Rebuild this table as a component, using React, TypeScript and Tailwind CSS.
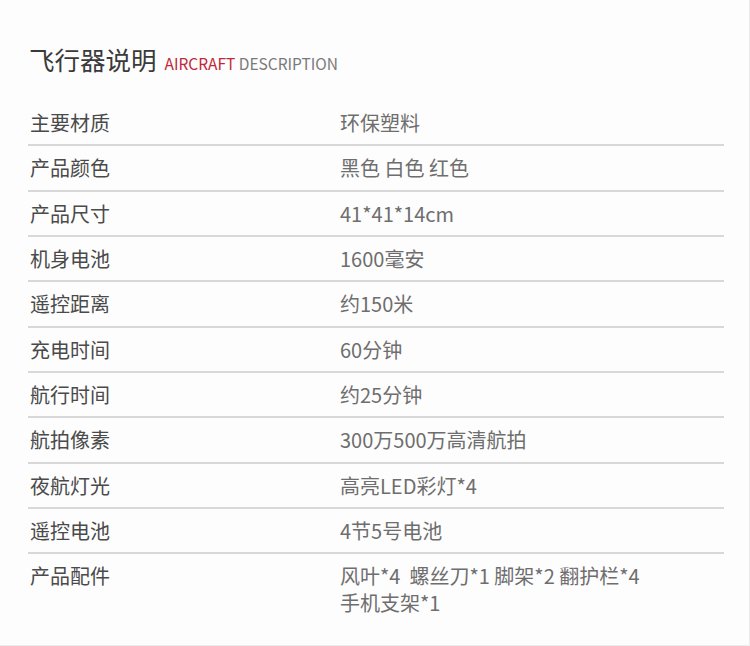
const specs = [
  { label: '主要材质', value: '环保塑料' },
  { label: '产品颜色', value: '黑色 白色 红色' },
  { label: '产品尺寸', value: '41*41*14cm' },
  { label: '机身电池', value: '1600毫安' },
  { label: '遥控距离', value: '约150米' },
  { label: '充电时间', value: '60分钟' },
  { label: '航行时间', value: '约25分钟' },
  { label: '航拍像素', value: '300万500万高清航拍' },
  { label: '夜航灯光', value: '高亮LED彩灯*4' },
  { label: '遥控电池', value: '4节5号电池' },
];

export default function App() {
  return (
    <div
      className="w-[750px] h-[646px] bg-[#fdfdfd] border-r border-b border-[#ececec] overflow-hidden"
      style={{ fontFamily: '"Noto Sans CJK SC", "Noto Sans", sans-serif' }}
    >
      {/* Title */}
      <div className="flex items-baseline pl-[29px] pt-[42px]">
        <h1 className="text-[25.5px] leading-[34px] text-[#3a3a3a] font-normal">飞行器说明</h1>
        <span className="ml-[8px] text-[15.5px]">
          <span className="text-[#c1273a]">AIRCRAFT</span>
          <span className="text-[#7a7a7a]"> DESCRIPTION</span>
        </span>
      </div>

      {/* Spec table */}
      <div className="mt-[25px] ml-[28px] w-[696px]">
        {specs.map((row) => (
          <div
            key={row.label}
            className="flex items-center h-[45.33px] border-b-2 border-[#d8d8d8] text-[20px] pt-[1px]"
          >
            <div className="w-[312px] pl-[2px] text-[#4a4a4a]">{row.label}</div>
            <div className="text-[#6e6e6e]">{row.value}</div>
          </div>
        ))}
        <div className="flex pt-[8px] text-[20px] leading-[27px]">
          <div className="w-[312px] pl-[2px] text-[#4a4a4a]">产品配件</div>
          <div className="text-[#6e6e6e]">
            <div>风叶*4&nbsp; 螺丝刀*1 脚架*2 翻护栏*4</div>
            <div>手机支架*1</div>
          </div>
        </div>
      </div>
    </div>
  );
}
